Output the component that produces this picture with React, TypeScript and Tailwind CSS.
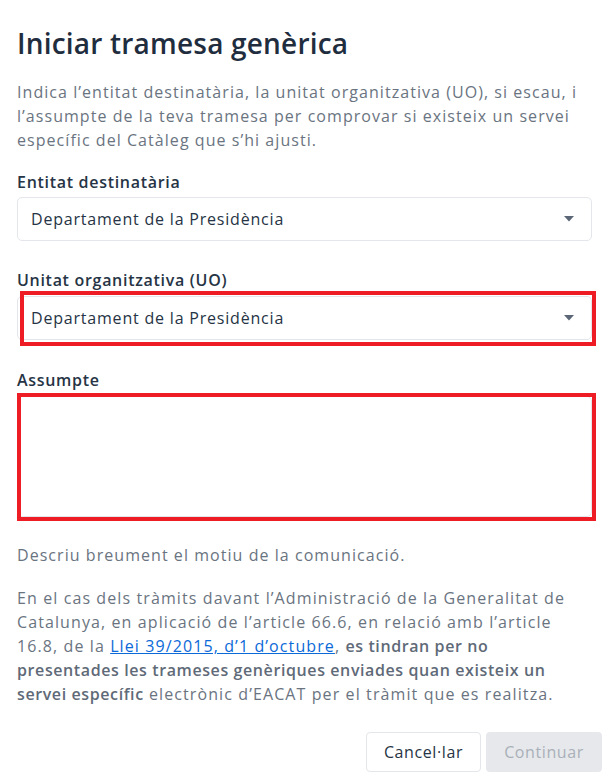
import { useState } from "react";

function Caret() {
    return (
        <svg width="10" height="6" viewBox="0 0 10 6" className="shrink-0">
            <path d="M0 0 L10 0 L5 5.5 Z" fill="#5b6676" />
        </svg>
    );
}

function SelectBox({ value }: { value: string }) {
    return (
        <div className="flex h-[44px] w-full items-center justify-between rounded-[5px] border border-[#e3e6ea] bg-white pl-[13px] pr-[17px] text-[16px] tracking-[0.8px] text-[#263445]">
            <span>{value}</span>
            <Caret />
        </div>
    );
}

export default function App() {
    const [subject, setSubject] = useState("");

    return (
        <div className="min-h-[781px] w-[610px] bg-white px-[17px] pt-[25px] font-['Open_Sans',sans-serif] text-[#6a7481]">
            <h1 className="text-[28px] font-semibold leading-[36px] tracking-[0.2px] text-[#1f2d3e]">
                Iniciar tramesa genèrica
            </h1>

            <p className="mt-[19px] text-[16px] leading-[24px] tracking-[1.05px]">
                Indica l’entitat destinatària, la unitat organitzativa (UO), si escau, i l’assumpte de la teva tramesa per comprovar si existeix un servei específic del Catàleg que s’hi ajusti.
            </p>

            <label className="mt-[18px] block text-[16px] font-semibold leading-[24px] tracking-[0.7px] text-[#263445]">
                Entitat destinatària
            </label>
            <div className="mt-[3px] pr-[1px]">
                <SelectBox value="Departament de la Presidència" />
            </div>

            <label className="mt-[27px] block text-[16px] font-semibold leading-[24px] tracking-[0.7px] text-[#263445]">
                Unitat organitzativa (UO)
            </label>
            <div className="relative mt-[4px] pr-[1px]">
                <SelectBox value="Departament de la Presidència" />
                <div className="pointer-events-none absolute left-[3px] right-[-3px] top-[-5px] bottom-[-6px] border-[4px] border-[#ee1c25]" />
            </div>

            <label className="mt-[28px] block text-[16px] font-semibold leading-[24px] tracking-[0.7px] text-[#263445]">
                Assumpte
            </label>
            <div className="relative mt-[4px] pr-[1px]">
                <textarea
                    value={subject}
                    onChange={(e) => setSubject(e.target.value)}
                    className="block h-[121px] w-full resize-none rounded-[5px] border border-[#e3e6ea] bg-white outline-none"
                />
                <div className="pointer-events-none absolute left-0 right-[-3px] top-[-3px] bottom-[-4px] border-[4px] border-[#ee1c25]" />
            </div>

            <p className="mt-[26px] text-[16px] leading-[24px] tracking-[1.05px]">
                Descriu breument el motiu de la comunicació.
            </p>

            <p className="mt-[19px] text-[16px] leading-[24px] tracking-[1.1px]">
                En el cas dels tràmits davant l’Administració de la Generalitat de Catalunya, en aplicació de l’article 66.6, en relació amb l’article 16.8, de la{" "}
                <a href="#" className="text-[#0b69d8] underline">Llei 39/2015, d’1 d’octubre</a>,{" "}
                <strong className="font-semibold tracking-[0.6px] text-[#5f6a78]">
                    es tindran per no presentades les trameses genèriques enviades quan existeix un servei específic
                </strong>{" "}
                electrònic d’EACAT per el tràmit que es realitza.
            </p>

            <div className="mr-[-9px] mt-[26px] flex justify-end gap-[5px]">
                <button className="h-[40px] w-[115px] rounded-[4px] border border-[#e3e6ea] bg-white text-[16px] tracking-[0.6px] text-[#263445]">
                    Cancel·lar
                </button>
                <button disabled className="h-[40px] w-[116px] rounded-[4px] bg-[#e6e8eb] text-[16px] tracking-[0.6px] text-[#a9b0b9]">
                    Continuar
                </button>
            </div>
        </div>
    );
}
